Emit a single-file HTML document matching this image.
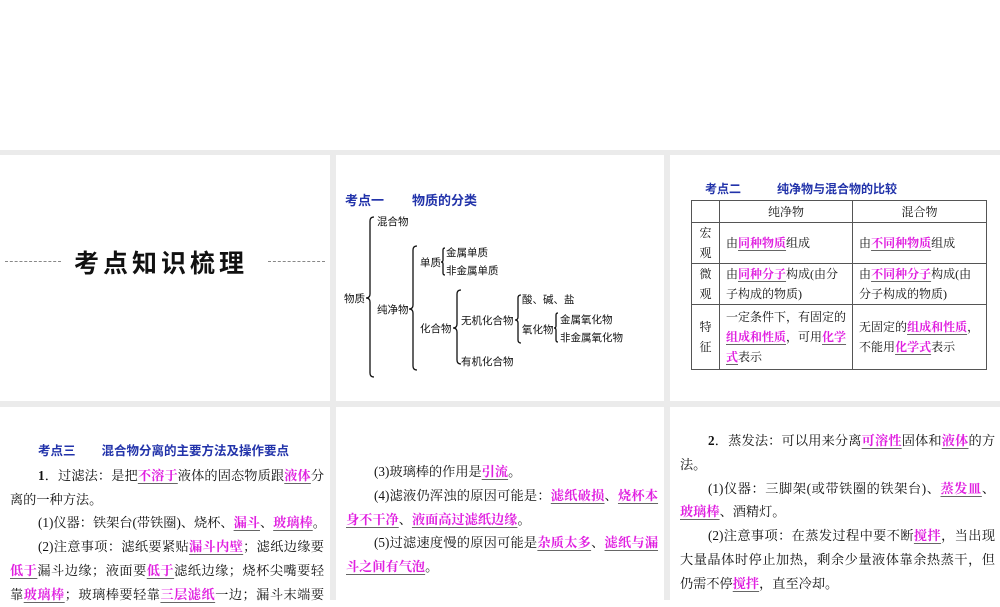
<!DOCTYPE html>
<html><head><meta charset="utf-8">
<style>
*{margin:0;padding:0;box-sizing:border-box}
body{width:1000px;height:600px;background:#fff;position:relative;overflow:hidden;font-family:"Liberation Serif","Noto Serif CJK SC",serif;color:#111}
.g{position:absolute;background:#ebebeb;z-index:2}
.p{position:absolute;font-size:13.2px;line-height:23.8px}
.p div{white-space:nowrap;text-align:justify;text-align-last:justify;height:23.8px}
.p div.i{padding-left:28px}
.p div.e{text-align-last:left}
.f{color:#e020e0;text-decoration:underline;text-decoration-color:#666;text-underline-offset:3px;font-weight:bold}
.h{color:#2233aa;font-weight:bold;font-family:"Liberation Sans","Noto Sans CJK SC",sans-serif}
table{position:absolute;border-collapse:collapse;font-size:12px;line-height:20px}
td{border:1px solid #555;padding:0 6px;vertical-align:middle;white-space:nowrap}
</style></head><body>
<div class="g" style="left:0;top:150px;width:1000px;height:5px"></div>
<div class="g" style="left:330px;top:150px;width:6px;height:450px"></div>
<div class="g" style="left:664px;top:150px;width:6px;height:450px"></div>
<div class="g" style="left:0;top:401px;width:1000px;height:6px"></div>

<div style="position:absolute;left:5px;top:261px;width:56px;border-top:1px dashed #888"></div>
<div style="position:absolute;left:268px;top:261px;width:57px;border-top:1px dashed #888"></div>
<div style="position:absolute;left:74px;top:244px;font:bold 25px 'Liberation Sans','Noto Sans CJK SC',sans-serif;letter-spacing:4px;color:#111">考点知识梳理</div>

<svg style="position:absolute;left:336px;top:155px" width="328" height="246" font-family="Liberation Sans,Noto Sans CJK SC,sans-serif" font-size="10.5" fill="#111">
<text x="9" y="50" font-size="13" font-weight="bold" fill="#2233aa">考点一</text>
<text x="76" y="50" font-size="13" font-weight="bold" fill="#2233aa">物质的分类</text>
<g fill="none" stroke="#111" stroke-width="1.3">
<path d="M38 62 Q34 62 34 66 L34 139 Q34 143 30 143 Q34 143 34 147 L34 218 Q34 222 38 222"/>
<path d="M81 91 Q77 91 77 95 L77 150 Q77 154 73 154 Q77 154 77 158 L77 211 Q77 215 81 215"/>
<path d="M109 93 Q107 93 107 95 L107 105 Q107 107 105 107 Q107 107 107 109 L107 118 Q107 120 109 120"/>
<path d="M125 135 Q121 135 121 139 L121 169 Q121 173 117 173 Q121 173 121 177 L121 205 Q121 209 125 209"/>
<path d="M185 140 Q182 140 182 143 L182 162 Q182 165 179 165 Q182 165 182 168 L182 185 Q182 188 185 188"/>
<path d="M222 158 Q220 158 220 160 L220 171 Q220 173 218 173 Q220 173 220 175 L220 185 Q220 187 222 187"/>
</g>
<text x="41" y="70">混合物</text>
<text x="8" y="147">物质</text>
<text x="41" y="158">纯净物</text>
<text x="84" y="111">单质</text>
<text x="110" y="101">金属单质</text>
<text x="110" y="119">非金属单质</text>
<text x="84" y="177">化合物</text>
<text x="125" y="169">无机化合物</text>
<text x="125" y="210">有机化合物</text>
<text x="186" y="148">酸、碱、盐</text>
<text x="186" y="178">氧化物</text>
<text x="224" y="168">金属氧化物</text>
<text x="224" y="186">非金属氧化物</text>
</svg>

<div class="h" style="position:absolute;left:705px;top:180px;font-size:12px">考点二<span style="margin-left:36px">纯净物与混合物的比较</span></div>
<table style="left:691px;top:200px;width:296px">
<tr style="height:22px"><td style="width:28px"></td><td style="width:133px;text-align:center">纯净物</td><td style="text-align:center">混合物</td></tr>
<tr style="height:40px"><td style="text-align:center;padding:0">宏<br>观</td><td>由<span class="f">同种物质</span>组成</td><td>由<span class="f">不同种物质</span>组成</td></tr>
<tr style="height:40px"><td style="text-align:center;padding:0">微<br>观</td><td>由<span class="f">同种分子</span>构成(由分<br>子构成的物质)</td><td>由<span class="f">不同种分子</span>构成(由<br>分子构成的物质)</td></tr>
<tr style="height:65px"><td style="text-align:center;padding:0">特<br>征</td><td>一定条件下，有固定的<br><span class="f">组成和性质</span>，可用<span class="f">化学</span><br><span class="f">式</span>表示</td><td>无固定的<span class="f">组成和性质</span>，<br>不能用<span class="f">化学式</span>表示</td></tr>
</table>

<div class="p" style="left:10px;top:440px;width:314px">
<div class="h e" style="font-size:12.5px;padding-left:28px">考点三<span style="margin-left:26px">混合物分离的主要方法及操作要点</span></div>
<div class="i"><b>1</b>．过滤法：是把<span class="f">不溶于</span>液体的固态物质跟<span class="f">液体</span>分</div>
<div class="e">离的一种方法。</div>
<div class="i">(1)仪器：铁架台(带铁圈)、烧杯、<span class="f">漏斗</span>、<span class="f">玻璃棒</span>。</div>
<div class="i">(2)注意事项：滤纸要紧贴<span class="f">漏斗内壁</span>；滤纸边缘要</div>
<div><span class="f">低于</span>漏斗边缘；液面要<span class="f">低于</span>滤纸边缘；烧杯尖嘴要轻</div>
<div>靠<span class="f">玻璃棒</span>；玻璃棒要轻靠<span class="f">三层滤纸</span>一边；漏斗末端要</div>
</div>

<div class="p" style="left:346px;top:460px;width:312px">
<div class="i e">(3)玻璃棒的作用是<span class="f">引流</span>。</div>
<div class="i">(4)滤液仍浑浊的原因可能是：<span class="f">滤纸破损</span>、<span class="f">烧杯本</span></div>
<div class="e"><span class="f">身不干净</span>、<span class="f">液面高过滤纸边缘</span>。</div>
<div class="i">(5)过滤速度慢的原因可能是<span class="f">杂质太多</span>、<span class="f">滤纸与漏</span></div>
<div class="e"><span class="f">斗之间有气泡</span>。</div>
</div>

<div class="p" style="left:680px;top:429px;width:315px">
<div class="i"><b>2</b>．蒸发法：可以用来分离<span class="f">可溶性</span>固体和<span class="f">液体</span>的方</div>
<div class="e">法。</div>
<div class="i">(1)仪器：三脚架(或带铁圈的铁架台)、<span class="f">蒸发皿</span>、</div>
<div class="e"><span class="f">玻璃棒</span>、酒精灯。</div>
<div class="i">(2)注意事项：在蒸发过程中要不断<span class="f">搅拌</span>，当出现</div>
<div>大量晶体时停止加热，剩余少量液体靠余热蒸干，但</div>
<div class="e">仍需不停<span class="f">搅拌</span>，直至冷却。</div>
</div>
</body></html>
